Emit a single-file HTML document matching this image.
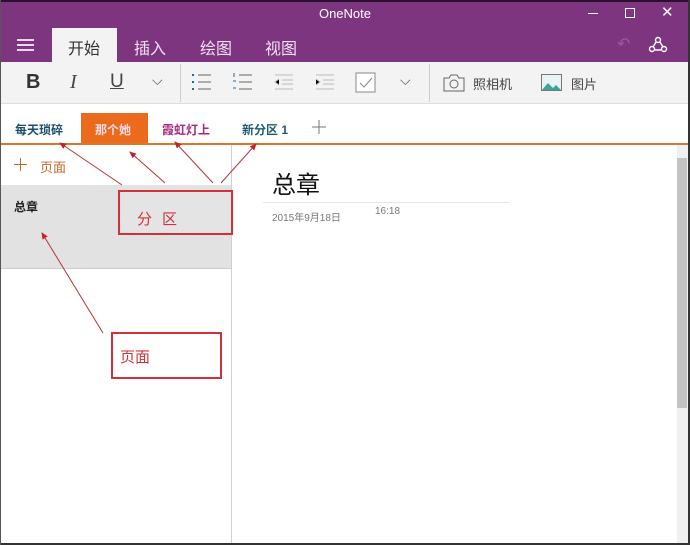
<!DOCTYPE html>
<html><head><meta charset="utf-8"><style>
*{margin:0;padding:0;box-sizing:border-box}
body{width:690px;height:545px;overflow:hidden;background:#fff;font-family:"Liberation Sans","Noto Sans CJK SC",sans-serif;position:relative}
.a{position:absolute}
</style></head><body>
<div class="a" style="left:0;top:0;width:690px;height:62px;background:#7e3580"></div>
<div class="a" style="left:0;top:0;width:690px;height:2px;background:#2a1030"></div>
<div class="a" style="left:0;top:6px;width:690px;text-align:center;color:#fff;font-size:13px">OneNote</div>
<div class="a" style="left:588px;top:13px;width:10px;height:1px;background:#fff"></div>
<div class="a" style="left:625px;top:8px;width:10px;height:10px;border:1px solid #fff"></div>
<div class="a" style="left:661px;top:3px;color:#fff;font-size:15px">✕</div>
<div class="a" style="left:17px;top:39px;width:17px;height:2px;background:#e8d8ea;box-shadow:0 5px 0 #e8d8ea,0 10px 0 #e8d8ea"></div>
<div class="a" style="left:52px;top:28px;width:65px;height:34px;background:#f3f3f3"></div>
<div class="a" style="left:68px;top:35px;font-size:16px;color:#333">开始</div>
<div class="a" style="left:134px;top:35px;font-size:16px;color:#f0e0f0">插入</div>
<div class="a" style="left:200px;top:35px;font-size:16px;color:#f0e0f0">绘图</div>
<div class="a" style="left:265px;top:35px;font-size:16px;color:#f0e0f0">视图</div>
<div class="a" style="left:617px;top:34px;font-size:16px;color:#9a5c98">↶</div>
<svg class="a" style="left:648px;top:36px" width="20" height="18" viewBox="0 0 20 18"><g fill="none" stroke="#fff" stroke-width="1.4"><circle cx="10" cy="4" r="2.5"/><circle cx="4" cy="13" r="2.5"/><circle cx="16" cy="13" r="2.5"/><path d="M8 6 5 11M12 6l3 5M7 14h6"/></g></svg>
<div class="a" style="left:0;top:62px;width:690px;height:42px;background:#f3f3f3;border-bottom:1px solid #ddd"></div>
<div class="a" style="left:26px;top:71px;font-size:20px;font-weight:bold;color:#333">B</div>
<div class="a" style="left:70px;top:71px;font-size:20px;font-style:italic;font-family:'Liberation Serif',serif;color:#444">I</div>
<div class="a" style="left:110px;top:71px;font-size:19px;text-decoration:underline;color:#444">U</div>
<div class="a" style="left:152px;top:72px;font-size:14px;color:#555">⌵</div>
<div class="a" style="left:180px;top:64px;width:1px;height:38px;background:#ccc"></div>
<svg class="a" style="left:190px;top:72px" width="24" height="20"><g stroke="#1a6aa8" stroke-width="2"><path d="M2 3h2M2 10h2M2 17h2"/></g><g stroke="#666"><path d="M8 3h13M8 10h13M8 17h13"/></g></svg>
<svg class="a" style="left:231px;top:72px" width="24" height="20"><g stroke="#1a6aa8"><path d="M3 1v4M2 9h3M2 16h3"/></g><g stroke="#666"><path d="M8 3h13M8 10h13M8 17h13"/></g></svg>
<svg class="a" style="left:273px;top:72px" width="24" height="20"><g stroke="#bbb"><path d="M2 3h18M9 8h11M9 12h11M2 17h18M6 7 2 10l4 3"/></g></svg>
<svg class="a" style="left:314px;top:72px" width="24" height="20"><g stroke="#bbb"><path d="M2 3h18M9 8h11M9 12h11M2 17h18M2 7l4 3-4 3"/></g></svg>
<svg class="a" style="left:355px;top:72px" width="22" height="22"><rect x="1" y="1" width="19" height="19" fill="#fff" stroke="#888"/><path d="M5 11l4 4 8-9" fill="none" stroke="#888"/></svg>
<div class="a" style="left:400px;top:72px;font-size:14px;color:#555">⌵</div>
<div class="a" style="left:429px;top:64px;width:1px;height:38px;background:#ccc"></div>
<svg class="a" style="left:443px;top:74px" width="22" height="18"><path d="M1 4h5l2-3h6l2 3h5v13H1z" fill="none" stroke="#666"/><circle cx="11" cy="10" r="4" fill="none" stroke="#666"/></svg>
<div class="a" style="left:473px;top:74px;font-size:13px;color:#444">照相机</div>
<svg class="a" style="left:541px;top:74px" width="21" height="17"><rect x="0.5" y="0.5" width="20" height="16" fill="#e8f4f4" stroke="#777"/><path d="M1 16l6-7 5 5 3-3 5 5z" fill="#3aa39a"/></svg>
<div class="a" style="left:571px;top:74px;font-size:13px;color:#444">图片</div>
<div class="a" style="left:15px;top:121px;font-size:12px;font-weight:bold;color:#1b4e6a">每天琐碎</div>
<div class="a" style="left:81px;top:113px;width:67px;height:30px;background:#ec6a1c"></div>
<div class="a" style="left:95px;top:121px;font-size:12px;font-weight:bold;color:#fde">那个她</div>
<div class="a" style="left:162px;top:121px;font-size:12px;font-weight:bold;color:#a32a80">霞虹灯上</div>
<div class="a" style="left:242px;top:121px;font-size:12px;font-weight:bold;color:#1b5c70">新分区 1</div>
<svg class="a" style="left:312px;top:120px" width="14" height="14"><path d="M7 0v14M0 7h14" stroke="#777"/></svg>
<div class="a" style="left:0;top:143px;width:690px;height:2px;background:#d9772d"></div>
<div class="a" style="left:231px;top:145px;width:1px;height:400px;background:#d0d0d0"></div>
<svg class="a" style="left:14px;top:158px" width="13" height="13"><path d="M6.5 0v13M0 6.5h13" stroke="#c06a2a"/></svg>
<div class="a" style="left:40px;top:157px;font-size:13px;color:#c06a2a">页面</div>
<div class="a" style="left:0;top:185px;width:231px;height:84px;background:#e2e2e2;border-bottom:1px solid #ccc"></div>
<div class="a" style="left:14px;top:198px;font-size:12px;font-weight:bold;color:#222">总章</div>
<div class="a" style="left:272px;top:165px;font-size:24px;color:#111">总章</div>
<div class="a" style="left:263px;top:202px;width:246px;height:1px;background:#e6e6e6"></div>
<div class="a" style="left:272px;top:209px;font-size:10px;color:#777">2015年9月18日</div>
<div class="a" style="left:375px;top:206px;font-size:10px;color:#777">16:18</div>
<div class="a" style="left:677px;top:145px;width:11px;height:400px;background:#f0f0f0"></div>
<div class="a" style="left:677px;top:158px;width:10px;height:250px;background:#c3c3c3"></div>
<div class="a" style="left:688px;top:0;width:2px;height:545px;background:#333"></div>
<div class="a" style="left:0;top:543px;width:690px;height:2px;background:#333"></div>
<div class="a" style="left:0;top:0;width:1px;height:545px;background:#555"></div>
<div class="a" style="left:118px;top:190px;width:115px;height:45px;border:2px solid #d0323a;background:#e4e4e4"></div>
<div class="a" style="left:137px;top:208px;font-size:15px;color:#d0323a;letter-spacing:10px">分区</div>
<div class="a" style="left:111px;top:332px;width:111px;height:47px;border:2px solid #d0323a"></div>
<div class="a" style="left:120px;top:346px;font-size:15px;color:#d0323a">页面</div>
<svg class="a" style="left:0;top:0" width="690" height="545"><defs><marker id="m" markerWidth="8" markerHeight="8" refX="6" refY="4" orient="auto"><path d="M0 1 7 4 0 7z" fill="#c8202a"/></marker></defs><g stroke="#b33" stroke-width="1" marker-end="url(#m)"><path d="M122 185 60 143"/><path d="M165 183 130 152"/><path d="M213 183 175 142"/><path d="M221 183 256 144"/><path d="M103 333 42 233"/></g></svg>
</body></html>
